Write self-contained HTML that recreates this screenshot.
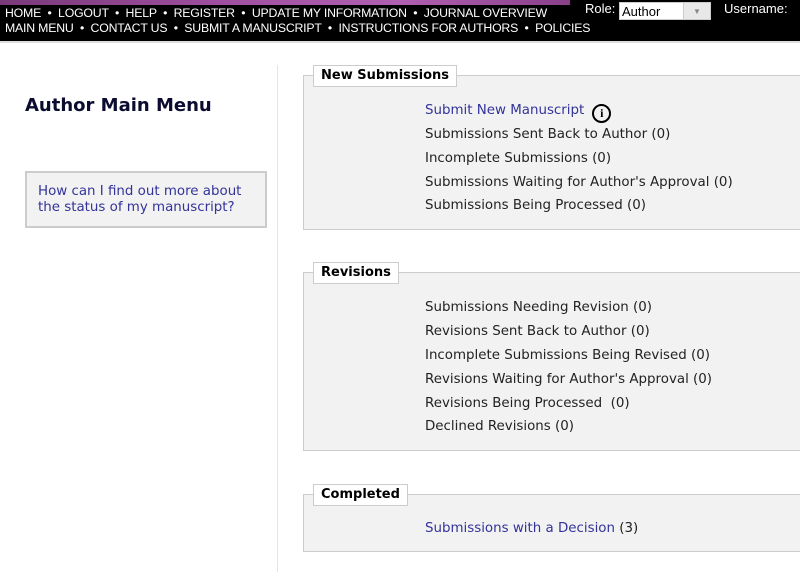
<!DOCTYPE html>
<html><head><meta charset="utf-8"><style>
body{margin:0;width:800px;height:572px;overflow:hidden;background:#fff;font-family:"DejaVu Sans",Verdana,sans-serif;position:relative}
.top{position:absolute;left:0;top:0;width:800px;height:41px;background:#000}
.strip{position:absolute;left:0;top:0;width:570px;height:5px;background:linear-gradient(90deg,#7a3a7a,#a050a0 40%,#b060b0 70%,#8a408a)}
.nav{position:absolute;left:5px;color:#fff;font:12.3px "Liberation Sans",Arial,sans-serif;white-space:nowrap;letter-spacing:-0.2px}
.hr{position:absolute;left:0;top:41px;width:800px;height:2px;background:#ddd}
.role{position:absolute;left:585px;top:1px;color:#fff;font:13px "Liberation Sans",sans-serif}
.sel{position:absolute;left:619px;top:2px;width:92px;height:18px;background:#fff;border:1px solid #ccc;box-sizing:border-box;font:13px "Liberation Sans",sans-serif;color:#000;padding-left:2px;line-height:17px}
.sel b{position:absolute;right:0;top:0;width:26px;height:16px;background:#e8e8e8;border-left:1px solid #ccc;font-size:8px;color:#888;text-align:center;font-weight:normal}
.user{position:absolute;left:724px;top:1px;color:#fff;font:13px "Liberation Sans",sans-serif}
h1{position:absolute;left:25px;top:95px;margin:0;font-size:18px;color:#0c0c30;font-weight:bold}
.div{position:absolute;left:277px;top:65px;width:1px;height:507px;background:#e4e4e4}
.help{position:absolute;left:25px;top:171px;width:242px;height:57px;box-sizing:border-box;border:2px solid #ccc;background:#f2f2f2;color:#33339a;font-size:13.4px;padding:11px 0 0 11px;line-height:16px;white-space:nowrap}
.box{position:absolute;left:303px;width:520px;background:#f2f2f2;border:1px solid #ccc;box-sizing:border-box}
.leg{position:absolute;left:313px;height:22px;background:#fff;border:1px solid #ccc;box-sizing:border-box;font-weight:bold;font-size:13px;padding:0 7px;line-height:20px;color:#000}
.it{position:absolute;left:425px;font-size:13.4px;color:#222;white-space:nowrap}
.a{color:#33339a}
.info{display:inline-block;width:15px;height:15px;border:2px solid #000;border-radius:50%;text-align:center;font:bold 12px "Liberation Serif",serif;line-height:15px;margin-left:8px;vertical-align:-3px;color:#000}
</style></head><body>
<div class="top"><div class="strip"></div>
<div class="nav" style="top:6px">HOME &nbsp;•&nbsp; LOGOUT &nbsp;•&nbsp; HELP &nbsp;•&nbsp; REGISTER &nbsp;•&nbsp; UPDATE MY INFORMATION &nbsp;•&nbsp; JOURNAL OVERVIEW</div>
<div class="nav" style="top:21px">MAIN MENU &nbsp;•&nbsp; CONTACT US &nbsp;•&nbsp; SUBMIT A MANUSCRIPT &nbsp;•&nbsp; INSTRUCTIONS FOR AUTHORS &nbsp;•&nbsp; POLICIES</div>
<div class="role">Role:</div><div class="sel">Author<b>▼</b></div><div class="user">Username:</div>
</div>
<div class="hr"></div>
<h1>Author Main Menu</h1>
<div class="div"></div>
<div class="help">How can I find out more about<br>the status of my manuscript?</div>

<div class="box" style="top:75px;height:155px"></div>
<div class="leg" style="top:65px">New Submissions</div>
<div class="it a" style="top:103px">Submit New Manuscript<span class="info">i</span></div>
<div class="it" style="top:127px">Submissions Sent Back to Author (0)</div>
<div class="it" style="top:151px">Incomplete Submissions (0)</div>
<div class="it" style="top:175px">Submissions Waiting for Author's Approval (0)</div>
<div class="it" style="top:198px">Submissions Being Processed (0)</div>

<div class="box" style="top:272px;height:179px"></div>
<div class="leg" style="top:262px">Revisions</div>
<div class="it" style="top:300px">Submissions Needing Revision (0)</div>
<div class="it" style="top:324px">Revisions Sent Back to Author (0)</div>
<div class="it" style="top:348px">Incomplete Submissions Being Revised (0)</div>
<div class="it" style="top:372px">Revisions Waiting for Author's Approval (0)</div>
<div class="it" style="top:396px">Revisions Being Processed &nbsp;(0)</div>
<div class="it" style="top:419px">Declined Revisions (0)</div>

<div class="box" style="top:494px;height:58px"></div>
<div class="leg" style="top:484px">Completed</div>
<div class="it" style="top:521px"><span class="a">Submissions with a Decision</span> (3)</div>
</body></html>
